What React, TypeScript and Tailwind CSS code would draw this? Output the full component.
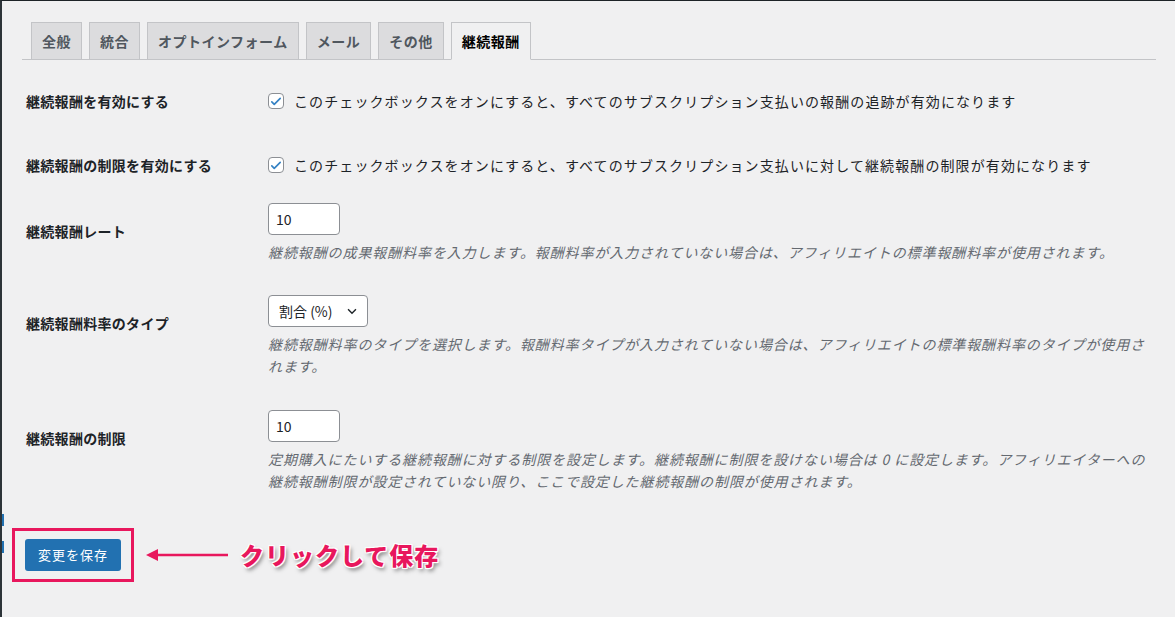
const jp = { fontFamily: '"Noto Sans CJK JP", "Noto Sans", sans-serif' }

const tabs = ['全般', '統合', 'オプトインフォーム', 'メール', 'その他', '継続報酬']

function Check() {
  return (
    <span className="w-4 h-4 shrink-0 rounded-[4px] border border-[#8c8f94] bg-white flex items-center justify-center">
      <svg viewBox="0 0 20 20" className="w-[15px] h-[15px]">
        <path d="M4 10.5l3.5 3.5L16 5.5" fill="none" stroke="#3582c4" strokeWidth="2.4" strokeLinecap="round" strokeLinejoin="round" />
      </svg>
    </span>
  )
}

function Row({ label, h, children }: { label: string; h: string; children: React.ReactNode }) {
  return (
    <div className={`flex ${h}`}>
      <div className="w-[266px] shrink-0 pl-[24px] text-[14px] font-bold text-[#1d2327] leading-[20px] tracking-[0.3px]">{label}</div>
      <div className="flex-1 pr-[24px]">{children}</div>
    </div>
  )
}

const desc = 'text-[14px] italic text-[#646970] leading-[22px] mt-[6px] tracking-[0.9px]'
const chk = 'flex items-center gap-[10px] text-[14px] leading-[20px] tracking-[1.1px]'

export default function App() {
  return (
    <div style={jp} className="w-[1175px] h-[617px] bg-[#f0f0f1] border-t border-[#1d2327] border-l-2 border-l-[#2c3338] overflow-hidden relative">
      <div className="ml-[20px] mr-[19px] mt-[21px] flex gap-[7px] border-b border-[#c3c4c7] pl-[9px]">
        {tabs.map((t, i) => (
          <div
            key={t}
            className={`h-[38px] px-[10px] flex items-center text-[14px] font-bold border border-[#c3c4c7] -mb-px tracking-[0.5px] ${
              i === 5 ? 'bg-[#f0f0f1] border-b-[#f0f0f1] text-[#000]' : 'bg-[#dcdcde] text-[#50575e]'
            }`}
          >
            {t}
          </div>
        ))}
      </div>

      <div className="pt-[31px] text-[#1d2327]">
        <Row label="継続報酬を有効にする" h="h-[64px]">
          <div className={chk}><Check />このチェックボックスをオンにすると、すべてのサブスクリプション支払いの報酬の追跡が有効になります</div>
        </Row>
        <Row label="継続報酬の制限を有効にする" h="h-[66px]">
          <div className={chk}><Check />このチェックボックスをオンにすると、すべてのサブスクリプション支払いに対して継続報酬の制限が有効になります</div>
        </Row>
        <Row label="継続報酬レート" h="h-[92px]">
          <div className="-mt-[18px] w-[72px] h-[32px] rounded-[4px] border border-[#8c8f94] bg-white px-[7px] flex items-center text-[14px]">10</div>
          <div className={desc}>継続報酬の成果報酬料率を入力します。報酬料率が入力されていない場合は、アフィリエイトの標準報酬料率が使用されます。</div>
        </Row>
        <Row label="継続報酬料率のタイプ" h="h-[115px]">
          <div className="-mt-[18px] w-[100px] h-[32px] rounded-[4px] border border-[#8c8f94] bg-white pl-[10px] pr-[8px] flex items-center justify-between text-[14px]">
            割合 (%)
            <svg viewBox="0 0 16 16" className="w-[14px] h-[14px]"><path d="M3.5 6l4.5 4.5L12.5 6" fill="none" stroke="#1d2327" strokeWidth="1.6" /></svg>
          </div>
          <div className={desc}>継続報酬料率のタイプを選択します。報酬料率タイプが入力されていない場合は、アフィリエイトの標準報酬料率のタイプが使用されます。</div>
        </Row>
        <Row label="継続報酬の制限" h="h-[100px]">
          <div className="-mt-[18px] w-[72px] h-[32px] rounded-[4px] border border-[#8c8f94] bg-white px-[7px] flex items-center text-[14px]">10</div>
          <div className={desc}>定期購入にたいする継続報酬に対する制限を設定します。継続報酬に制限を設けない場合は 0 に設定します。アフィリエイターへの継続報酬制限が設定されていない限り、ここで設定した継続報酬の制限が使用されます。</div>
        </Row>
      </div>

      <div className="flex items-center ml-[10px]">
        <div className="border-[3px] border-[#e8175d] px-[10px] py-[8px]">
          <div className="bg-[#2271b1] text-white text-[13px] tracking-[1px] rounded-[3px] w-[96px] h-[32px] flex items-center justify-center">変更を保存</div>
        </div>
        <svg viewBox="0 0 90 14" className="w-[90px] h-[14px] ml-[12px]">
          <path d="M4 7H82" stroke="#e8175d" strokeWidth="2.5" />
          <path d="M0 7L12 1V13Z" fill="#e8175d" />
        </svg>
        <div
          className="ml-[4px] text-[24px] font-black text-[#e8175d] tracking-[1px]"
          style={{ textShadow: '0 0 2px #fff, 0 0 2px #fff, 0 0 3px #fff, 1px 1px 0 #fff, -1px -1px 0 #fff, 1px -1px 0 #fff, -1px 1px 0 #fff, 2px 3px 4px rgba(0,0,0,0.5)' }}
        >
          クリックして保存
        </div>
      </div>
      <div className="absolute left-0 top-[513px] w-[2px] h-[12px] bg-[#2271b1]" />
      <div className="absolute left-0 top-[540px] w-[2px] h-[12px] bg-[#2271b1]" />
    </div>
  )
}
